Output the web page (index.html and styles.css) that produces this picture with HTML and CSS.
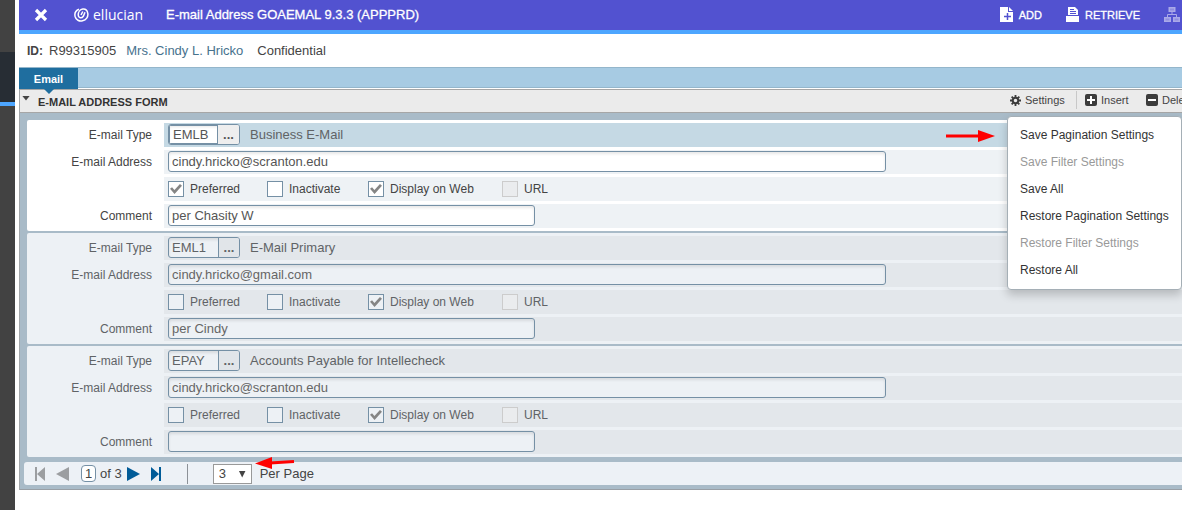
FILE: index.html
```html
<!DOCTYPE html>
<html lang="en">
<head>
<meta charset="utf-8">
<title>E-mail Address GOAEMAL</title>
<link rel="stylesheet" href="styles.css">
</head>
<body>
<div class="app">
  <aside class="rail"><div class="rail-active"></div></aside>
  <main class="main">
    <header class="header">
      <button class="close" aria-label="Close"><svg width="14" height="14" viewBox="0 0 14 14"><path d="M2 2L12 12M12 2L2 12" stroke="#fff" stroke-width="3.200"/></svg></button>
      <div class="brand">
        <svg width="15" height="14" viewBox="0 0 15 14" fill="none" stroke="#fff" stroke-width="1.500"><path d="M5 1.300C2 2.500 .4 5.500 1.100 8.500C2 12 5.300 13.600 8.500 12.800C12.200 12 14.400 8.800 13.800 5.400C13.300 2.400 11 .9 8.800 1.100C6 1.500 4.200 4.300 4.200 7C4.200 10.200 7.600 10.700 9.300 8.300L11 4.200M8.800 3.500L7 7"/></svg>
        <span>ellucian</span>
      </div>
      <h1 class="title">E-mail Address GOAEMAL 9.3.3 (APPPRD)</h1>
      <nav class="actions">
        <button class="action"><svg width="13" height="15" viewBox="0 0 13 15"><path d="M0 0H8V5H13V15H0Z" fill="#fff"/><path d="M9 0L13 4H9Z" fill="#fff"/><path d="M7.500 6V13M4 9.500H11" stroke="#5252d0" stroke-width="1.500"/></svg><span>ADD</span></button>
        <button class="action"><svg width="13" height="15" viewBox="0 0 13 15"><path d="M2 0H9L12 3V8H2Z" fill="#fff"/><path d="M4 2.500H8M4 4.500H10M4 6.500H10" stroke="#5252d0"/><path d="M0 9H13V15H0Z" fill="#fff"/></svg><span>RETRIEVE</span></button>
        <button class="action action-related" aria-label="Related"><svg width="16" height="15" viewBox="0 0 16 15" fill="#aaa9e8"><path d="M4.500 0H11.500V5H4.500ZM0 10H7V15H0ZM9 10H16V15H9Z"/><path d="M8 5V7.500M3.500 10V7.500H12.500V10" fill="none" stroke="#aaa9e8"/><path d="M6 1.500H10V3.500H6ZM1.500 11.500H5.500V13.500H1.500ZM10.500 11.500H14.500V13.500H10.500Z" fill="#8f8de0"/></svg></button>
      </nav>
    </header>

    <div class="keys"><b>ID:</b><span>R99315905</span><a href="#person">Mrs. Cindy L. Hricko</a><span class="keys-note">Confidential</span></div>
    <nav class="tabs"><button class="tab">Email</button></nav>

    <section class="section">
      <div class="section-head">
        <button class="toggle" aria-label="Collapse section"></button>
        <h2>E-MAIL ADDRESS FORM</h2>
        <div class="tools">
          <button class="tool tool-settings"><svg width="11" height="11" viewBox="0 0 12 12"><circle cx="6" cy="6" r="3" fill="none" stroke="#3c3c3c" stroke-width="2.200"/><path d="M6 0V2.500M6 9.500V12M0 6H2.500M9.500 6H12M1.800 1.800L3.400 3.400M8.600 8.600L10.200 10.200M1.800 10.200L3.400 8.600M8.600 3.400L10.200 1.800" stroke="#3c3c3c" stroke-width="2"/></svg><span>Settings</span></button>
          <button class="tool tool-insert"><svg width="12" height="12" viewBox="0 0 12 12"><rect width="12" height="12" rx="2" fill="#3c3c3c"/><path d="M6 2V10M2 6H10" stroke="#fff" stroke-width="2"/></svg><span>Insert</span></button>
          <button class="tool"><svg width="12" height="12" viewBox="0 0 12 12"><rect width="12" height="12" rx="2" fill="#3c3c3c"/><path d="M2 6H10" stroke="#fff" stroke-width="2"/></svg><span>Delete</span></button>
        </div>
      </div>

      <div class="block">
        <div class="records">
          <article class="record record-current">
            <label class="label" for="type1">E-mail Type</label>
            <div class="field field-active"><span class="lookup"><input id="type1" value="EMLB"><button aria-label="Look up type">...</button></span><span class="desc">Business E-Mail</span></div>
            <label class="label" for="mail1">E-mail Address</label>
            <div class="field"><input class="text text-long" id="mail1" value="cindy.hricko@scranton.edu"></div>
            <div class="field field-checks">
              <label class="check check-first"><input type="checkbox" checked>Preferred</label>
              <label class="check check-second"><input type="checkbox">Inactivate</label>
              <label class="check check-third"><input type="checkbox" checked>Display on Web</label>
              <label class="check"><input type="checkbox" disabled>URL</label>
            </div>
            <label class="label" for="note1">Comment</label>
            <div class="field"><input class="text text-short" id="note1" value="per Chasity W"></div>
          </article>

          <article class="record">
            <label class="label" for="type2">E-mail Type</label>
            <div class="field"><span class="lookup"><input id="type2" value="EML1"><button aria-label="Look up type">...</button></span><span class="desc">E-Mail Primary</span></div>
            <label class="label" for="mail2">E-mail Address</label>
            <div class="field"><input class="text text-long" id="mail2" value="cindy.hricko@gmail.com"></div>
            <div class="field field-checks">
              <label class="check check-first"><input type="checkbox">Preferred</label>
              <label class="check check-second"><input type="checkbox">Inactivate</label>
              <label class="check check-third"><input type="checkbox" checked>Display on Web</label>
              <label class="check"><input type="checkbox" disabled>URL</label>
            </div>
            <label class="label" for="note2">Comment</label>
            <div class="field"><input class="text text-short" id="note2" value="per Cindy"></div>
          </article>

          <article class="record">
            <label class="label" for="type3">E-mail Type</label>
            <div class="field"><span class="lookup"><input id="type3" value="EPAY"><button aria-label="Look up type">...</button></span><span class="desc">Accounts Payable for Intellecheck</span></div>
            <label class="label" for="mail3">E-mail Address</label>
            <div class="field"><input class="text text-long" id="mail3" value="cindy.hricko@scranton.edu"></div>
            <div class="field field-checks">
              <label class="check check-first"><input type="checkbox">Preferred</label>
              <label class="check check-second"><input type="checkbox">Inactivate</label>
              <label class="check check-third"><input type="checkbox" checked>Display on Web</label>
              <label class="check"><input type="checkbox" disabled>URL</label>
            </div>
            <label class="label" for="note3">Comment</label>
            <div class="field"><input class="text text-short" id="note3" value=""></div>
          </article>
        </div>

        <footer class="pager">
          <button class="page-btn" aria-label="First page"><svg width="10" height="14" viewBox="0 0 10 14" fill="#9c9ea1"><path d="M0 0H2V14H0ZM10 0V14L2 7Z"/></svg></button>
          <button class="page-btn" aria-label="Previous page"><svg width="13" height="14" viewBox="0 0 13 14" fill="#9c9ea1"><path d="M13 0V14L0 7Z"/></svg></button>
          <input class="page-number" aria-label="Page" value="1">
          <span class="page-total">of 3</span>
          <button class="page-btn page-next" aria-label="Next page"><svg width="13" height="14" viewBox="0 0 13 14" fill="#005b98"><path d="M0 0V14L13 7Z"/></svg></button>
          <button class="page-btn" aria-label="Last page"><svg width="10" height="14" viewBox="0 0 10 14" fill="#005b98"><path d="M8 0H10V14H8ZM0 0V14L8 7Z"/></svg></button>
          <span class="divider"></span>
          <span class="select-wrap"><select id="per-page"><option>3</option></select></span>
          <label for="per-page">Per Page</label>
          <svg class="pager-arrow" width="40" height="12" viewBox="0 0 40 12"><path d="M15 6L39 4.500" stroke="red" stroke-width="3"/><path d="M0 6.500L17 0V12Z" fill="red"/></svg>
        </footer>
      </div>

      <div class="menu">
        <button>Save Pagination Settings</button>
        <button disabled>Save Filter Settings</button>
        <button>Save All</button>
        <button>Restore Pagination Settings</button>
        <button disabled>Restore Filter Settings</button>
        <button>Restore All</button>
        <svg class="menu-arrow" width="49" height="12" viewBox="0 0 49 12"><path d="M0 6H33" stroke="red" stroke-width="3"/><path d="M49 6L32 0V12Z" fill="red"/></svg>
      </div>
    </section>
  </main>
</div>
</body>
</html>
```
FILE: styles.css
```css
* { box-sizing: border-box; }
body { margin: 0; background: #fff; color: #444; font: 12px/16px "Liberation Sans", Arial, sans-serif; }
button, input, select { font: inherit; color: inherit; margin: 0; }
button { border: 0; padding: 0; background: none; }
svg { display: block; flex: none; }

.app { display: flex; min-height: 100vh; overflow: hidden; }
.rail { flex: none; width: 15px; margin-right: 4px; padding-top: 52px; background: #424242; }
.rail-active { height: 54px; background: #272d34; border-bottom: 4px solid #4da6ff; }
.main { flex: 1; min-width: 0; }

.header { display: flex; align-items: center; height: 34px; padding: 0 2px 1px 15px; background: #5252d0; border-bottom: 4px solid #4da6ff; color: #fff; }
.close { width: 14px; }
.brand { display: flex; align-items: center; gap: 4px; width: 118px; padding-left: 26px; font: 14px/16px "Open Sans", sans-serif; }
.title { margin: 0; font-size: 13px; font-weight: 400; -webkit-text-stroke: 0.3px #fff; white-space: nowrap; }
.actions { display: flex; align-items: center; margin-left: auto; }
.action { display: flex; align-items: center; gap: 6px; margin-left: 24px; font-size: 11px; -webkit-text-stroke: 0.3px #fff; }
.action-related { -webkit-text-stroke: 0; }

.keys { display: flex; align-items: center; gap: 10px; height: 33px; padding-left: 8px; font-size: 13px; }
.keys b { margin-right: -4px; font-size: 12px; }
.keys a { color: #47728d; text-decoration: none; }
.keys-note { margin-left: 4px; }

.tabs { height: 21px; background: #a7cbe3; border: solid #94b6cb; border-width: 1px 0; }
.tab { position: relative; width: 59px; height: 21px; background: #1f6e9f; color: #fff; font-size: 11px; font-weight: 700; z-index: 1; }
.tab::after { content: ""; position: absolute; left: 24px; top: 20px; border: 6px solid transparent; border-top-color: #1f6e9f; border-bottom: 0; }

.section { position: relative; margin-top: 1px; border-left: 1px solid #a3a7aa; }
.section-head { display: flex; align-items: center; height: 24px; background: #ebebeb; border: solid #a6a6a6; border-width: 1px 0; }
.toggle { width: 8px; height: 5px; margin: -6px 8px 0 2px; background: #444; clip-path: polygon(0 0, 100% 0, 50% 100%); }
h2 { margin: 2px 0 0; font-size: 11px; line-height: 16px; font-weight: 700; color: #333; }
.tools { display: flex; align-items: center; flex: none; width: 172px; height: 20px; margin: -2px 0 0 auto; overflow: hidden; font-size: 11px; }
.tool { display: flex; align-items: center; gap: 4px; flex: none; }
.tool-settings { width: 66px; }
.tool-insert { width: 70px; height: 18px; padding-left: 8px; border-left: 1px solid #c8c8c8; }

.block { padding: 7px 0 4px 4px; background: #a9bbc8; border-bottom: 1px solid #999fa5; }
.records { display: flex; flex-direction: column; gap: 2px; padding-left: 3px; }
.record { display: grid; grid-template-columns: 137px minmax(0, 1fr); gap: 3px 0; padding: 3px 0; background: #edf1f5; border-radius: 2px 0 0 2px; color: #606366; }
.record-current { background: #fff; color: #444; }
.label { padding: 4px 12px 0 0; text-align: right; }
.field { display: flex; align-items: flex-start; height: 24px; padding: 1px 0 0 4px; background: #e3e7eb; }
.record-current .field { background: #eef2f5; }
.record-current .field-active { background: #c5d9e4; }
.field-checks { grid-column: 2; padding-top: 4px; }
.text, .lookup { height: 21px; border: 1px solid #7590a5; border-radius: 3px; background: #edf1f5; box-shadow: inset 0 2px 3px #00000018; }
.text { padding: 0 3px; font-size: 13px; color: #666; }
.record-current .text, .record-current .lookup { background-color: #fff; color: #555; }
.text-long { width: 718px; max-width: 100%; }
.text-short { width: 367px; max-width: 100%; }
.lookup { display: flex; flex: none; width: 72px; overflow: hidden; font-size: 13px; }
.lookup input { width: 49px; padding: 0 3px; border: 0; outline: 0; background: transparent; }
.lookup button { flex: 1; border-left: 1px solid #7590a5; background: #e1e5e9; font-weight: 700; }
.record-current .lookup button { background: #eee; border-left: 0; }
.record-current .lookup input { border: 1px solid #7590a5; }
.desc { padding: 3px 0 0 10px; font-size: 13px; color: #606366; white-space: nowrap; }

.check { display: flex; gap: 6px; flex: none; line-height: 16px; white-space: nowrap; }
.check-first { width: 99px; }
.check-second { width: 101px; }
.check-third { width: 134px; }
.check input { appearance: none; display: grid; place-items: center; width: 16px; height: 16px; border: 1px solid #7590a5; background: #edf1f5; }
.record-current .check input { background: #fff; }
.check input:disabled, .record-current .check input:disabled { border-color: #ccc; background: #eaecee; }
.check input:checked::before { content: ""; width: 12px; height: 10px; background: #858585; clip-path: polygon(0 48%, 17% 32%, 37% 60%, 83% 0, 100% 18%, 38% 100%); }

.pager { position: relative; display: flex; align-items: center; gap: 12px; height: 23px; margin-top: 5px; padding-left: 11px; background: #edf1f6; border-radius: 3px 0 0 3px; font-size: 13px; }
.page-number { width: 15px; height: 17px; margin-left: 1px; padding: 0 3px; border: 1px solid #7590a5; border-radius: 4px; background: #fff; }
.page-total { margin-left: -8px; }
.page-next { margin-left: -7px; }
.page-btn { margin-right: -1px; }
.divider { width: 1px; height: 20px; margin: 0 13px 0 15px; background: #8c9197; }
.select-wrap { position: relative; width: 39px; height: 20px; }
.select-wrap select { appearance: none; width: 100%; height: 100%; padding: 0 5px; border: 1px solid #999; border-radius: 0; background: #fff; }
.select-wrap::after { content: ""; position: absolute; right: 6px; top: 7px; width: 7px; height: 7px; background: #444; clip-path: polygon(0 0, 100% 0, 50% 100%); pointer-events: none; }
.pager label { margin-left: -4px; }
.pager-arrow { position: absolute; left: 231px; top: -5px; }

.menu { position: absolute; top: 27px; right: 0; display: flex; flex-direction: column; width: 175px; padding: 4px 0 6px; background: #fff; border: 1px solid #a5afb6; border-radius: 4px; box-shadow: 0 5px 10px #00000033; color: #333; }
.menu button { height: 27px; padding-left: 12px; text-align: left; white-space: nowrap; }
.menu button:disabled { color: #999; }
.menu-arrow { position: absolute; right: 186px; top: 13px; }
```
